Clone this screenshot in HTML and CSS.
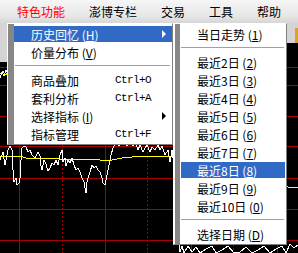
FILE: index.html
```html
<!DOCTYPE html>
<html lang="zh-CN">
<head>
    <meta charset="UTF-8">
    <title>特色功能</title>
    <link rel="stylesheet" href="styles.css">
</head>
<body>
    <div class="menubar">
        <span class="top-item red">特色功能</span>
        <span class="top-item">澎博专栏</span>
        <span class="top-item">交易</span>
        <span class="top-item">工具</span>
        <span class="top-item">帮助</span>
    </div>

    <svg class="chart" width="298" height="230" viewBox="0 0 298 230">
        <g transform="translate(0,-23)">
            <rect x="0" y="23" width="298" height="230" fill="#000"/>
            <!-- grid -->
            <g stroke="#a80000" stroke-width="1" shape-rendering="crispEdges">
                <line x1="0" y1="67.5" x2="298" y2="67.5"/>
                <line x1="0" y1="85.5" x2="298" y2="85.5"/>
                <line x1="0" y1="116.5" x2="298" y2="116.5"/>
                <line x1="0" y1="146.5" x2="298" y2="146.5"/>
                <line x1="0" y1="178.5" x2="298" y2="178.5"/>
                <line x1="0" y1="209.5" x2="298" y2="209.5"/>
                <line x1="0" y1="240.5" x2="298" y2="240.5"/>
                <line x1="19.5" y1="68" x2="19.5" y2="253"/>
                <line x1="105.5" y1="68" x2="105.5" y2="253"/>
                <line x1="191.5" y1="68" x2="191.5" y2="253"/>
                <line x1="277.5" y1="68" x2="277.5" y2="253"/>
            </g>
            <g stroke="#a80000" stroke-width="1" stroke-dasharray="2 2" shape-rendering="crispEdges">
                <line x1="62.5" y1="68" x2="62.5" y2="253"/>
                <line x1="147.5" y1="68" x2="147.5" y2="253"/>
                <line x1="233.5" y1="68" x2="233.5" y2="253"/>
            </g>
            <!-- average -->
            <polyline fill="none" stroke="#ffff00" stroke-width="1" shape-rendering="crispEdges"
                points="0,157 20,156 26,158 42,158 60,159 82,159 100,160 112,160 122,158 132,157 142,156 175,156 230,170 288,187 298,187"/>
            <!-- price -->
            <polyline fill="none" stroke="#ffffff" stroke-width="1" shape-rendering="crispEdges"
                points="0,160 3,152 5,165 8,150 10,146 12,150 13,170 14,182 16,178 17,185 19,183 20,178 21,160 22,148 24,146 26,147 28,152 30,150 32,155 35,158 38,152 40,156 41,166 42,170 44,160 46,164 48,171 50,168 52,163 54,165 56,160 58,165 60,155 62,150 63,162 65,158 66,166 68,160 70,163 72,158 74,165 76,170 78,168 80,172 82,178 84,182 85,188 86,193 87,182 88,178 90,172 92,165 94,168 96,166 98,170 100,172 102,178 103,183 105,185 106,180 107,175 109,165 111,155 113,148 115,144 117,140 119,146 121,140 123,145 125,142 127,146 130,140 133,146 135,142 138,150 140,145 143,152 145,148 147,145 150,152 152,147 155,150 158,145 160,150 162,146 165,155 168,150 170,162 172,150 178,200 180,252 182,246 184,253 188,246 192,252 196,247 200,253 206,249 212,246 216,253 222,250 228,246 234,253 240,252 246,247 252,253 258,250 264,246 270,253 276,249 282,246 286,253 290,244 294,248 298,245"/>
            <polyline fill="none" stroke="#ffffff" stroke-width="1" shape-rendering="crispEdges"
                points="0,78 2,72 4,76 6,70 8,74"/>
            <polyline fill="none" stroke="#ffff00" stroke-width="1" shape-rendering="crispEdges"
                points="0,74 3,71 5,75 8,73"/>
            <!-- toolbar pieces -->
            <rect x="0" y="23" width="7" height="39" fill="#d4d4d4"/>
            <rect x="287" y="23" width="11" height="20" fill="#d4d4d4"/>
            <rect x="295" y="28" width="3" height="15" fill="#e0a020"/>
        </g>
    </svg>

    <div class="menu main-menu">
        <div class="item hl">
            <span class="label">历史回忆 (<u>H</u>)</span>
            <span class="arrow"></span>
        </div>
        <div class="item">
            <span class="label">价量分布 (<u>V</u>)</span>
        </div>
        <div class="sep"></div>
        <div class="item">
            <span class="label">商品叠加</span>
            <span class="key">Ctrl+O</span>
        </div>
        <div class="item">
            <span class="label">套利分析</span>
            <span class="key">Ctrl+A</span>
        </div>
        <div class="item">
            <span class="label">选择指标 (<u>I</u>)</span>
            <span class="arrow"></span>
        </div>
        <div class="item">
            <span class="label">指标管理</span>
            <span class="key">Ctrl+F</span>
        </div>
    </div>

    <div class="menu sub-menu">
        <div class="item"><span class="label">当日走势 (<u>1</u>)</span></div>
        <div class="sep"></div>
        <div class="item"><span class="label">最近2日 (<u>2</u>)</span></div>
        <div class="item"><span class="label">最近3日 (<u>3</u>)</span></div>
        <div class="item"><span class="label">最近4日 (<u>4</u>)</span></div>
        <div class="item"><span class="label">最近5日 (<u>5</u>)</span></div>
        <div class="item"><span class="label">最近6日 (<u>6</u>)</span></div>
        <div class="item"><span class="label">最近7日 (<u>7</u>)</span></div>
        <div class="item hl"><span class="label">最近8日 (<u>8</u>)</span></div>
        <div class="item"><span class="label">最近9日 (<u>9</u>)</span></div>
        <div class="item"><span class="label">最近10日 (<u>0</u>)</span></div>
        <div class="sep"></div>
        <div class="item"><span class="label">选择日期 (<u>D</u>)</span></div>
    </div>
</body>
</html>
```

FILE: styles.css
```css
body {
    margin: 0;
    width: 298px;
    height: 253px;
    overflow: hidden;
    background-color: black;
    font-family: "Noto Sans CJK SC", "Liberation Sans", sans-serif;
    font-size: 12px;
    color: black;
    position: relative;
}
.menubar {
    display: flex;
    height: 23px;
    align-items: center;
    padding-left: 5px;
    box-sizing: border-box;
    background: linear-gradient(#f6f6f6, #e6e6e6 70%, #d6d6d6);
}
.top-item {
    padding: 0 12px;
    line-height: 23px;
}
.top-item.red {
    color: #ff0000;
}
.chart {
    display: block;
}
.menu {
    position: absolute;
    top: 23px;
    display: flex;
    flex-direction: column;
    box-sizing: border-box;
    border-top: 1px solid #ffffff;
    border-left: 1px solid #ffffff;
    border-right: 1px solid #808080;
    border-bottom: 1px solid #808080;
    padding-top: 1px;
    padding-bottom: 1px;
}
.main-menu {
    left: 7px;
    width: 166px;
    padding-left: 6px;
    background: linear-gradient(to right, #878787 6px, #ffffff 6px);
}
.sub-menu {
    left: 173px;
    width: 114px;
    padding-left: 7px;
    padding-right: 1px;
    background: linear-gradient(to right, #ffffff 1px, #878787 1px, #878787 6px, #ffffff 6px);
}
.item {
    display: flex;
    align-items: center;
    height: 16px;
    margin: 1px 0;
    white-space: nowrap;
}
.main-menu .item {
    padding-left: 17px;
}
.sub-menu .item {
    padding-left: 16px;
}
.main-menu .label {
    width: 84px;
}
.item u {
    text-decoration: underline;
    text-underline-offset: 1px;
}
.key {
    font-family: "Liberation Mono", monospace;
    font-size: 11px;
    letter-spacing: -0.6px;
}
.arrow {
    margin-left: auto;
    margin-right: 6px;
    width: 0;
    height: 0;
    border-left: 4px solid black;
    border-top: 4px solid transparent;
    border-bottom: 4px solid transparent;
}
.item.hl {
    background-color: #316ac5;
    color: white;
}
.item.hl .arrow {
    border-left-color: white;
}
.sep {
    height: 1px;
    margin: 4px 2px 5px 1px;
    background-color: #a0a0a0;
}
.sub-menu .sep {
    margin: 4px 1px 5px 0;
}
```
